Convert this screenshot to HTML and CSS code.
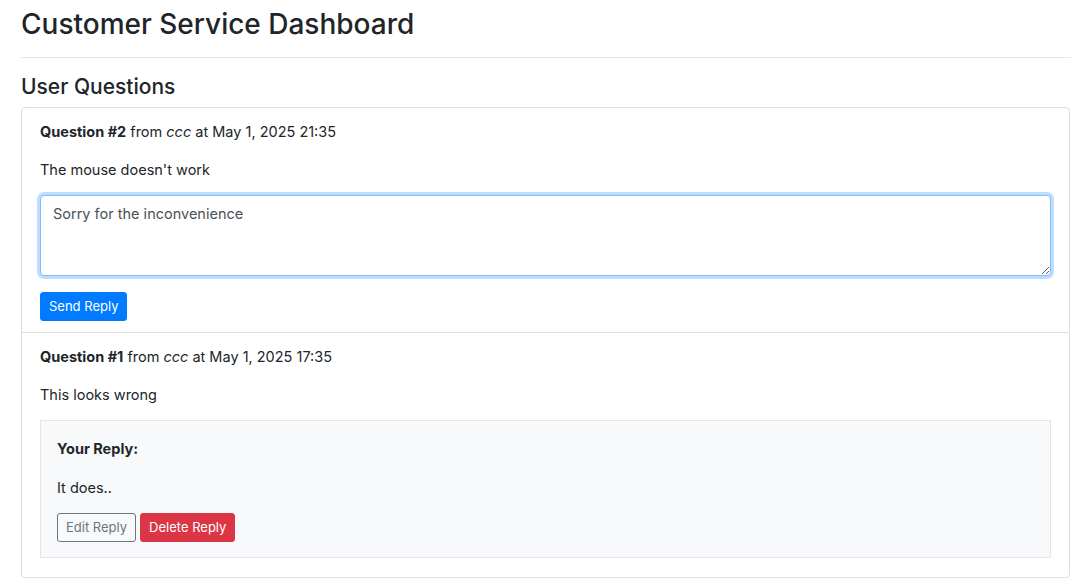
FILE: index.html
```html
<!DOCTYPE html>
<html lang="en">
<head>
<meta charset="utf-8">
<title>Customer Service Dashboard</title>
<link rel="stylesheet" href="styles.css">
</head>
<body>
<div class="page">
  <h1 class="title">Customer Service Dashboard</h1>
  <hr class="rule">
  <h2 class="section-title">User Questions</h2>
  <div class="question-list">
    <div class="question-item">
      <p class="q-meta"><strong>Question #2</strong> from <em>ccc</em> at May 1, 2025 21:35</p>
      <p class="q-text">The mouse doesn't work</p>
      <form class="reply-form">
        <textarea class="reply-input is-focused" rows="3">Sorry for the inconvenience</textarea>
        <div class="actions">
          <button type="button" class="btn btn-primary">Send Reply</button>
        </div>
      </form>
    </div>
    <div class="question-item">
      <p class="q-meta"><strong>Question #1</strong> from <em>ccc</em> at May 1, 2025 17:35</p>
      <p class="q-text">This looks wrong</p>
      <div class="reply-box">
        <p class="reply-label"><strong>Your Reply:</strong></p>
        <p class="reply-text">It does..</p>
        <div class="actions">
          <button type="button" class="btn btn-outline">Edit Reply</button>
          <button type="button" class="btn btn-danger">Delete Reply</button>
        </div>
      </div>
    </div>
  </div>
</div>
</body>
</html>
```
FILE: styles.css
```css
* { box-sizing: border-box; }
html, body { margin: 0; padding: 0; background: #fff; }
body {
  font-family: Inter, "Liberation Sans", sans-serif;
  font-size: 14.5px;
  line-height: 22px;
  color: #212529;
}
.page { padding: 0 9px 0 21px; }
.title {
  margin: 0;
  padding-top: 5px;
  font-size: 28px;
  line-height: 38px;
  font-weight: 500;
}
.rule {
  margin: 14px 0 0;
  border: 0;
  border-top: 1px solid #e6e6e6;
}
.section-title {
  margin: 16px 0 0;
  font-size: 21px;
  line-height: 26px;
  font-weight: 500;
}
.question-list {
  margin-top: 7px;
  margin-right: 1px;
  border: 1px solid #dfdfdf;
  border-radius: 4px;
}
.question-item { padding: 13px 18px 11px; }
.question-item + .question-item { border-top: 1px solid #dfdfdf; padding-bottom: 19px; }
p { margin: 0; }
.q-meta { margin-bottom: 16px; }
.q-text { margin-bottom: 14px; }
strong { font-weight: 700; }
.reply-form { margin: 0; }
.reply-input {
  display: block;
  width: 100%;
  height: 81px;
  padding: 7px 12px;
  font-family: inherit;
  font-size: 14.5px;
  line-height: 22px;
  color: #495057;
  border: 1px solid #ced4da;
  border-radius: 4px;
  resize: vertical;
  margin-bottom: 16px;
}
.reply-input.is-focused {
  border-color: #80bdff;
  box-shadow: 0 0 0 3px rgba(0, 123, 255, 0.25);
  outline: none;
}
.actions { display: flex; gap: 4px; }
.btn {
  font-family: inherit;
  font-size: 13px;
  line-height: 19px;
  padding: 4px 8px;
  border: 1px solid transparent;
  border-radius: 3px;
  cursor: pointer;
}
.btn-primary { background: #007bff; border-color: #007bff; color: #fff; }
.btn-outline { background: transparent; border-color: #6c757d; color: #6c757d; }
.btn-danger { background: #dc3545; border-color: #dc3545; color: #fff; }
.reply-box {
  background: #f8f9fa;
  border: 1px solid #e3e5e8;
  padding: 17px 16px 15px;
}
.reply-label { margin-bottom: 17px; }
.reply-text { margin-bottom: 14px; }
```
